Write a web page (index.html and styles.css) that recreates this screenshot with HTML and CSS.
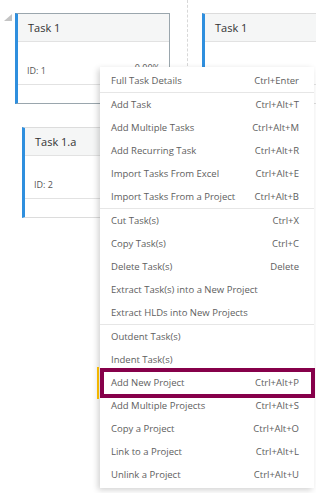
FILE: index.html
```html
<!DOCTYPE html>
<html lang="en">
<head>
    <meta charset="UTF-8">
    <meta name="viewport" content="width=device-width, initial-scale=1.0">
    <title>Task board</title>
    <link rel="stylesheet" href="styles.css">
</head>
<body>

    <div class="board">
        <span class="collapse-arrow"></span>
        <div class="lane-line"></div>

        <div class="card card-selected card-one">
            <div class="card-header">Task 1</div>
            <div class="card-body">
                <span>ID: 1</span>
                <span class="card-progress">0.00%</span>
            </div>
            <div class="card-footer"></div>
        </div>

        <div class="card card-two">
            <div class="card-header">Task 1</div>
            <div class="card-body">
                <span>ID: 3</span>
            </div>
            <div class="card-footer"></div>
        </div>

        <div class="card card-three">
            <div class="card-header">Task 1.a</div>
            <div class="card-body">
                <span>ID: 2</span>
            </div>
            <div class="card-footer"></div>
        </div>

        <ul class="context-menu">
            <li class="menu-item"><span>Full Task Details</span><span>Ctrl+Enter</span></li>
            <li class="menu-divider"></li>
            <li class="menu-item"><span>Add Task</span><span>Ctrl+Alt+T</span></li>
            <li class="menu-item"><span>Add Multiple Tasks</span><span>Ctrl+Alt+M</span></li>
            <li class="menu-item"><span>Add Recurring Task</span><span>Ctrl+Alt+R</span></li>
            <li class="menu-item"><span>Import Tasks From Excel</span><span>Ctrl+Alt+E</span></li>
            <li class="menu-item"><span>Import Tasks From a Project</span><span>Ctrl+Alt+B</span></li>
            <li class="menu-divider"></li>
            <li class="menu-item"><span>Cut Task(s)</span><span>Ctrl+X</span></li>
            <li class="menu-item"><span>Copy Task(s)</span><span>Ctrl+C</span></li>
            <li class="menu-item"><span>Delete Task(s)</span><span>Delete</span></li>
            <li class="menu-item"><span>Extract Task(s) into a New Project</span></li>
            <li class="menu-item"><span>Extract HLDs into New Projects</span></li>
            <li class="menu-divider"></li>
            <li class="menu-item"><span>Outdent Task(s)</span></li>
            <li class="menu-item"><span>Indent Task(s)</span></li>
            <li class="menu-item"><span>Add New Project</span><span>Ctrl+Alt+P</span></li>
            <li class="menu-item"><span>Add Multiple Projects</span><span>Ctrl+Alt+S</span></li>
            <li class="menu-item"><span>Copy a Project</span><span>Ctrl+Alt+O</span></li>
            <li class="menu-item"><span>Link to a Project</span><span>Ctrl+Alt+L</span></li>
            <li class="menu-item"><span>Unlink a Project</span><span>Ctrl+Alt+U</span></li>
        </ul>

        <div class="highlight-box"></div>
    </div>

</body>
</html>
```

FILE: styles.css
```css
body {
    margin: 0;
    padding: 0;
    background: #ffffff;
    font-family: 'Open Sans', 'Noto Sans', sans-serif;
    overflow: hidden;
}

.board {
    position: relative;
    width: 316px;
    height: 493px;
    overflow: hidden;
}

.collapse-arrow {
    position: absolute;
    left: 4px;
    top: 14px;
    width: 0;
    height: 0;
    border-left: 8px solid transparent;
    border-bottom: 7px solid #c4c4c4;
}

.lane-line {
    position: absolute;
    left: 187px;
    top: 0;
    height: 66px;
    border-left: 1px dashed #d8d8d8;
}

.card {
    position: absolute;
    display: flex;
    flex-direction: column;
    background: #ffffff;
    border: 1px solid #dcdcdc;
    border-left: 3px solid #2f8fde;
    box-sizing: border-box;
    height: 91px;
}

.card-selected {
    border-color: #9aa6ad;
    border-left-color: #2f8fde;
}

.card-one {
    left: 15px;
    top: 13px;
    width: 155px;
}

.card-two {
    left: 202px;
    top: 13px;
    width: 140px;
}

.card-three {
    left: 22px;
    top: 127px;
    width: 140px;
}

.card-header {
    height: 27px;
    background: #f5f6f6;
    border-bottom: 1px solid #e2e2e2;
    padding-left: 10px;
    font-size: 11px;
    line-height: 27px;
    color: #333333;
}

.card-body {
    display: flex;
    justify-content: space-between;
    align-items: flex-end;
    height: 43px;
    padding: 0 9px 7px 9px;
    box-sizing: border-box;
    border-bottom: 1px solid #e2e2e2;
    font-size: 9px;
    color: #555555;
}

.card-progress {
    margin-bottom: 3px;
}

.card-footer {
    flex: 1;
}

.context-menu {
    position: absolute;
    left: 100px;
    top: 67px;
    width: 214px;
    margin: 0;
    padding: 2px 0;
    list-style: none;
    background: #ffffff;
    box-shadow: -2px 2px 6px rgba(0, 0, 0, 0.18);
}

.menu-item {
    display: flex;
    justify-content: space-between;
    align-items: center;
    height: 23px;
    padding: 0 15px 0 11px;
    font-size: 9.5px;
    color: #5e5e5e;
    white-space: nowrap;
}

.menu-divider {
    height: 1px;
    background: #e6e6e6;
}

.highlight-box {
    position: absolute;
    left: 100px;
    top: 368px;
    width: 215px;
    height: 30px;
    border: 4px solid #86004a;
    box-sizing: border-box;
}

.highlight-box::before {
    content: "";
    position: absolute;
    left: -7px;
    top: -5px;
    width: 2px;
    height: 32px;
    background: #f2b600;
}
```
